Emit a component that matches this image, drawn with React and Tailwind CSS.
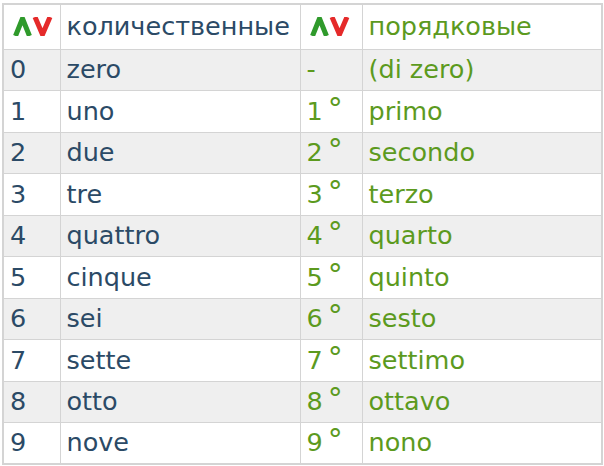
import React from "react";

// rows: cardinal + ordinal
const rows = [
  ["0", "zero", "-", "(di zero)"],
  ["1", "uno", "1", "primo"],
  ["2", "due", "2", "secondo"],
  ["3", "tre", "3", "terzo"],
  ["4", "quattro", "4", "quarto"],
  ["5", "cinque", "5", "quinto"],
  ["6", "sei", "6", "sesto"],
  ["7", "sette", "7", "settimo"],
  ["8", "otto", "8", "ottavo"],
  ["9", "nove", "9", "nono"],
];

function SortIcon() {
  return (
    <svg width="40" height="19" viewBox="0 0 40 19" className="block">
      <polyline
        points="2.5,19 9.5,1.5 16.5,19"
        fill="none"
        stroke="#2f9a2b"
        strokeWidth="5"
        strokeLinejoin="miter"
      />
      <polyline
        points="22,0 29.5,17.5 37,0"
        fill="none"
        stroke="#e52a2a"
        strokeWidth="5"
        strokeLinejoin="miter"
      />
    </svg>
  );
}

export default function App() {
  const cell = "border border-[#d4d4d4] px-[6px] align-middle";
  return (
    <div className="w-[604px] h-[466px] bg-white pt-[3px] pl-[2px] font-['DejaVu_Sans',Verdana,sans-serif] text-[25.5px] leading-none">
      <table className="border-collapse border-2 border-[#d4d4d4] w-[599px] table-fixed">
        <colgroup>
          <col className="w-[57px]" />
          <col className="w-[240px]" />
          <col className="w-[62px]" />
          <col className="w-[240px]" />
        </colgroup>
        <thead>
          <tr className="h-[45px] bg-white">
            <th className={`${cell} pl-[9px]`}>
              <SortIcon />
            </th>
            <th className={`${cell} text-left font-normal text-[#2b4a66]`}>
              количественные
            </th>
            <th className={`${cell} pl-[9px]`}>
              <SortIcon />
            </th>
            <th className={`${cell} text-left font-normal text-[#5c9a1e]`}>
              порядковые
            </th>
          </tr>
        </thead>
        <tbody>
          {rows.map((r, i) => (
            <tr
              key={r[0]}
              className={`h-[41.5px] ${i % 2 === 0 ? "bg-[#efefef]" : "bg-white"}`}
            >
              <td className={`${cell} text-[#2b4a66]`}>{r[0]}</td>
              <td className={`${cell} text-[#2b4a66]`}>{r[1]}</td>
              <td className={`${cell} text-[#5c9a1e] whitespace-nowrap`}>
                {r[2]}
                {r[2] !== "-" && (
                  <span className="ml-[5px] relative -top-[1px] text-[30px] leading-[0px]">°</span>
                )}
              </td>
              <td className={`${cell} text-[#5c9a1e]`}>{r[3]}</td>
            </tr>
          ))}
        </tbody>
      </table>
    </div>
  );
}
